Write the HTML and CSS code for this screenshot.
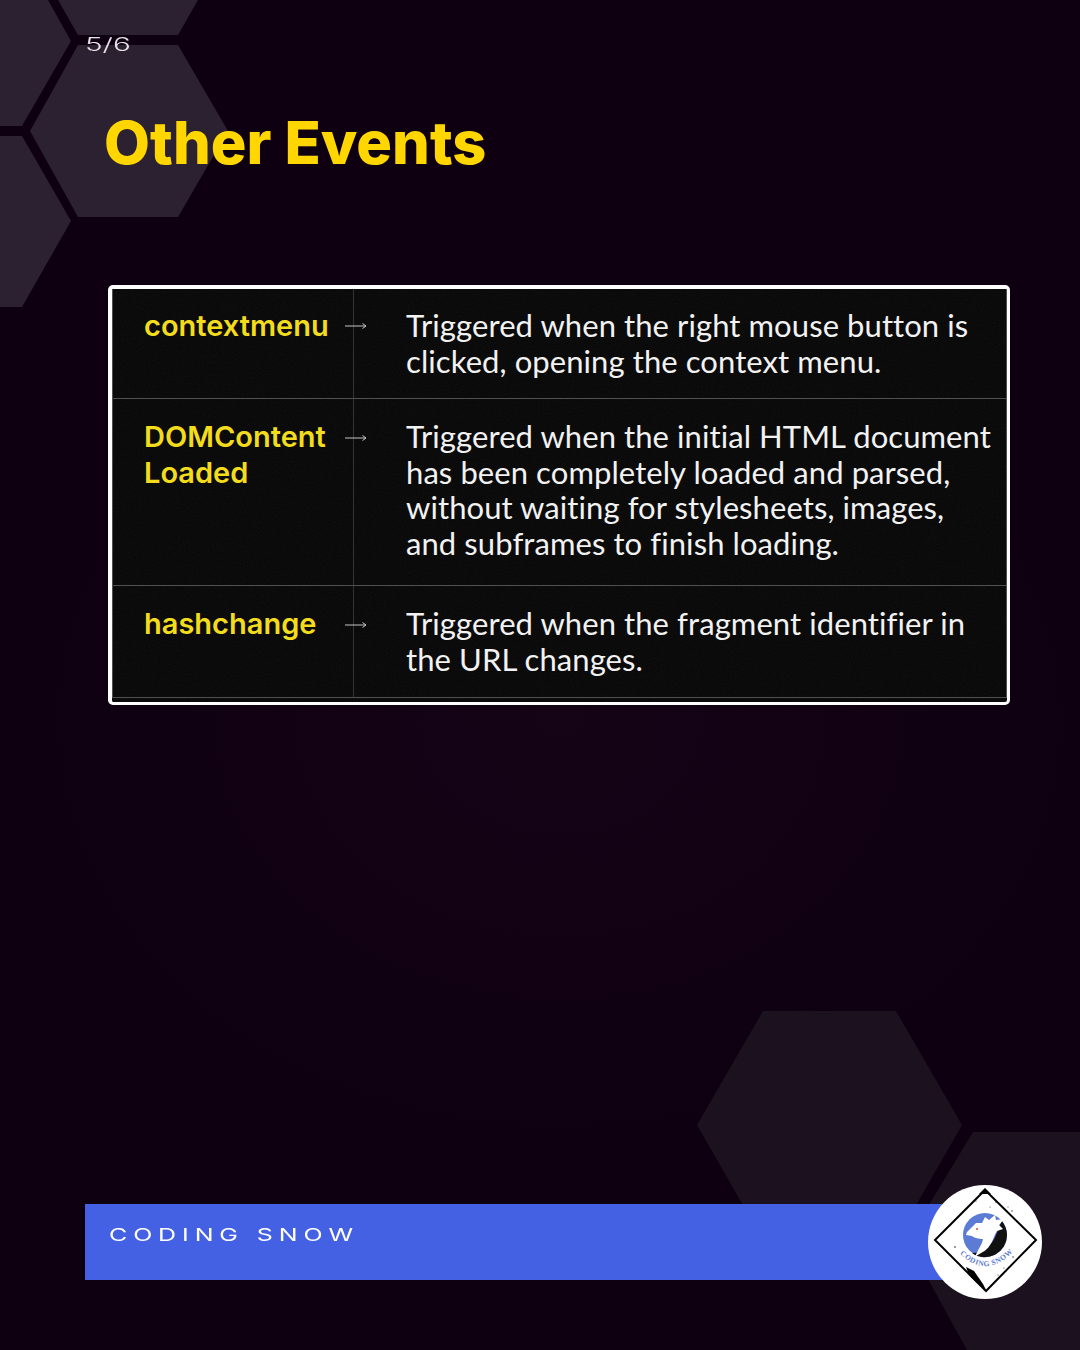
FILE: index.html
```html
<!DOCTYPE html>
<html lang="en">
<head>
    <meta charset="UTF-8">
    <meta name="viewport" content="width=device-width, initial-scale=1.0">
    <title>Other Events</title>
    <link rel="stylesheet" href="styles.css">
</head>
<body>
    <div class="slide">
        <!-- background hexagons -->
        <svg class="hexagons" width="1080" height="1350" viewBox="0 0 1080 1350">
            <g class="hex-light">
                <polygon points="58,0 198,0 178,35 78,35"/>
                <polygon points="78,45 178,45 228,131 178,217 78,217 30,131"/>
                <polygon points="0,0 48,0 71,41 22,126 0,126"/>
                <polygon points="0,136 22,136 71,221 22,307 0,307"/>
            </g>
            <g class="hex-dark">
                <polygon points="763,1011 896,1011 962,1125 896,1240 763,1240 697,1125"/>
                <polygon points="973,1132 1080,1132 1080,1350 967,1350 907,1241"/>
            </g>
        </svg>

        <div class="page-num">5/6</div>
        <h1 class="title">Other Events</h1>

        <div class="card">
            <!-- film grain over the table -->
            <svg class="grain" width="895" height="413">
                <filter id="grain-noise">
                    <feTurbulence type="fractalNoise" baseFrequency="0.9" numOctaves="2"/>
                    <feColorMatrix type="saturate" values="0"/>
                </filter>
                <rect width="895" height="413" filter="url(#grain-noise)"/>
            </svg>
            <div class="events">
                <div class="row row-first">
                    <div class="term">contextmenu<svg class="arrow" width="22" height="10" viewBox="0 0 22 10"><path d="M0 5H21M17.5 2.5L21 5L17.5 7.5"/></svg></div>
                    <div class="desc">Triggered when the right mouse button is clicked, opening the context menu.</div>
                </div>
                <div class="row">
                    <div class="term">DOMContent Loaded<svg class="arrow" width="22" height="10" viewBox="0 0 22 10"><path d="M0 5H21M17.5 2.5L21 5L17.5 7.5"/></svg></div>
                    <div class="desc">Triggered when the initial HTML document has been completely loaded and parsed, without waiting for stylesheets, images, and subframes to finish loading.</div>
                </div>
                <div class="row">
                    <div class="term">hashchange<svg class="arrow" width="22" height="10" viewBox="0 0 22 10"><path d="M0 5H21M17.5 2.5L21 5L17.5 7.5"/></svg></div>
                    <div class="desc">Triggered when the fragment identifier in the URL changes.</div>
                </div>
            </div>
        </div>

        <div class="footer">
            <div class="brand">
                <span class="brand-name">CODING SNOW</span>
            </div>
            <svg class="logo" width="114" height="114" viewBox="0 0 114 114">
                <circle cx="57" cy="57" r="57" fill="#fff"/>
                <path d="M57 5L108 55L58 106L7 55Z" fill="none" stroke="#000" stroke-width="2"/>
                <path d="M57 3L63 9L51 9Z" fill="#000"/>
                <path d="M38 82L46 86L55 99L58 105L48 97L41 90Z" fill="#000"/>
                <circle cx="57" cy="50" r="22" fill="#5b7bd5"/>
                <path d="M79 50A22 22 0 0 1 44 68C56 68 64 60 68 50C70 45 72 39 74 36C77 40 79 45 79 50Z" fill="#111"/>
                <path d="M39 47L48 38L54 38L57 32L61 35L67 30L68 35L76 34L71 40L75 44L69 46C66 50 65 56 62 60C59 66 52 68 47 72C50 64 54 60 55 54C51 54 46 53 44 51L38 50Z" fill="#fff"/>
                <circle cx="49" cy="44" r="1" fill="#e8452c"/>
                <path id="logo-arc" d="M31 68Q57 94 84 68" fill="none"/>
                <text class="logo-text"><textPath href="#logo-arc" startOffset="1">CODING SNOW</textPath></text>
                <g fill="#222">
                    <circle cx="68" cy="17" r="0.8"/>
                    <circle cx="48" cy="16" r="0.6"/>
                    <circle cx="84" cy="26" r="0.7"/>
                    <circle cx="80" cy="22" r="0.5"/>
                    <circle cx="27" cy="62" r="0.8"/>
                    <circle cx="85" cy="72" r="0.7"/>
                    <circle cx="76" cy="83" r="0.6"/>
                    <circle cx="70" cy="90" r="0.5"/>
                    <circle cx="62" cy="22" r="0.5"/>
                </g>
            </svg>
        </div>
    </div>
</body>
</html>
```

FILE: styles.css
```css
* {
    box-sizing: border-box;
}
body {
    margin: 0;
    background-color: #0e0011;
}
.slide {
    position: relative;
    display: flex;
    flex-direction: column;
    width: 1080px;
    height: 1350px;
    padding: 34px 70px 70px 85px;
    overflow: hidden;
    background: radial-gradient(ellipse 520px 420px at 560px 720px, #150316 0%, #0e0011 100%);
}
.hexagons {
    position: absolute;
    top: 0;
    left: 0;
}
.hex-light {
    fill: #2b2130;
}
.hex-dark {
    fill: #1c111e;
}
.page-num {
    position: relative;
    height: 22px;
    font-family: Inter, sans-serif;
    font-size: 18px;
    line-height: 22px;
    font-weight: 300;
    color: #e6e3e8;
    transform: scaleX(1.65);
    transform-origin: left center;
}
.title {
    position: relative;
    margin: 44px 0 0 19px;
    font-family: Inter, sans-serif;
    font-size: 59.5px;
    line-height: 84px;
    font-weight: 800;
    color: #ffd600;
}
.card {
    position: relative;
    width: 902px;
    height: 420px;
    margin: 101px 0 0 23px;
    border: solid #fff;
    border-width: 4px 3px 3px 4px;
    border-radius: 5px;
    background-color: #060606;
}
.grain {
    position: absolute;
    top: 0;
    left: 0;
    opacity: 0.06;
}
.events {
    position: relative;
    display: grid;
    grid-template-rows: 110px 187px 112px;
    border: solid #505050;
    border-width: 0 1px;
}
.row {
    display: grid;
    grid-template-columns: 241px 1fr;
    border-bottom: 1px solid #505050;
}
.term {
    position: relative;
    padding: 20px 20px 0 31px;
    border-right: 1px solid #333;
    font-family: Inter, sans-serif;
    font-size: 29px;
    line-height: 36px;
    font-weight: 600;
    color: #f3dc1c;
}
.row-first .term,
.row-first .desc {
    padding-top: 19px;
}
.arrow {
    position: absolute;
    top: 34px;
    left: 232px;
    fill: none;
    stroke: #c4c4c4;
    stroke-width: 1;
}
.row-first .arrow {
    top: 32px;
}
.desc {
    padding: 20px 10px 0 52px;
    font-family: Lato, sans-serif;
    font-size: 31px;
    line-height: 35.5px;
    letter-spacing: 0.08px;
    color: #f2f2f2;
}
.footer {
    position: relative;
    margin-top: auto;
    height: 76px;
}
.brand {
    display: flex;
    align-items: flex-start;
    width: 860px;
    height: 76px;
    padding: 19px 24px;
    background-color: #4361e2;
}
.brand-name {
    font-family: Inter, sans-serif;
    font-size: 17px;
    line-height: 24px;
    letter-spacing: 4px;
    color: #fff;
    transform: scaleX(1.47);
    transform-origin: left center;
}
.logo {
    position: absolute;
    top: -19px;
    left: 843px;
}
.logo-text {
    font-family: "Liberation Serif", serif;
    font-size: 7.5px;
    font-weight: 700;
    letter-spacing: 0.5px;
    fill: #5b7bd5;
}
```
